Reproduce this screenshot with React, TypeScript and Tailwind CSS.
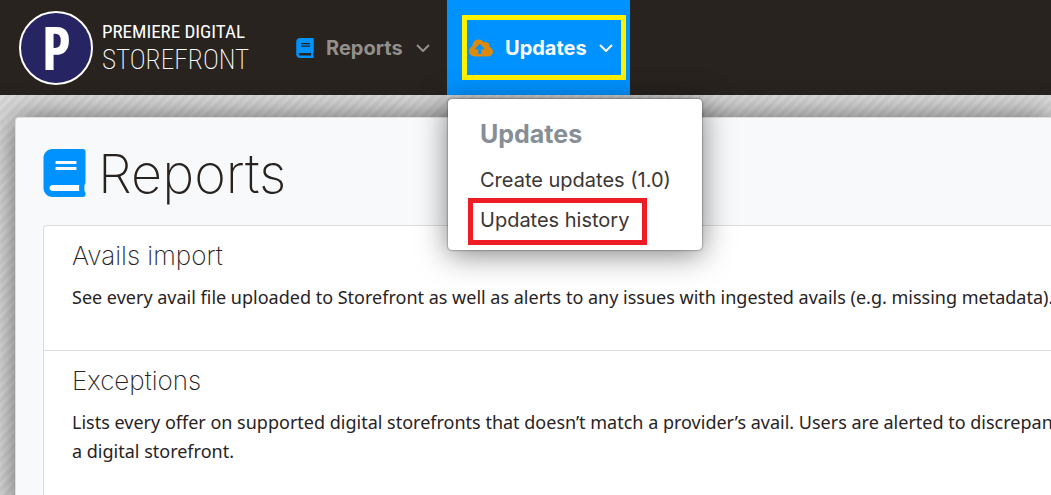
import React, { useState } from 'react';
import { FaBook, FaCloudUploadAlt } from 'react-icons/fa';

const reports = [
  {
    title: 'Avails import',
    lines: [
      'See every avail file uploaded to Storefront as well as alerts to any issues with ingested avails (e.g. missing metadata).'
    ]
  },
  {
    title: 'Exceptions',
    lines: [
      'Lists every offer on supported digital storefronts that doesn’t match a provider’s avail. Users are alerted to discrepan',
      'a digital storefront.'
    ]
  }
];

const Chevron: React.FC = () => (
  <svg viewBox="0 0 14 8" className="w-[14px] h-2" fill="none" stroke="currentColor" strokeWidth="2" aria-hidden="true">
    <path d="M1 1 L7 7 L13 1" />
  </svg>
);

const Logo: React.FC = () => (
  <a href="#" aria-label="Premiere Digital Storefront" className="flex items-center shrink-0 gap-2 text-white">
    <svg viewBox="0 0 76 76" className="w-[76px] h-[76px]" aria-hidden="true">
      <circle cx="38" cy="38" r="36" fill="#272463" stroke="#ffffff" strokeWidth="2" />
      <text x="38" y="60" textAnchor="middle" fill="#ffffff" fontSize="60" fontWeight="700" fontFamily="'Open Sans Condensed', 'Roboto Condensed', Roboto, sans-serif">
        P
      </text>
    </svg>
    <span className="flex flex-col w-[143px] font-['Roboto_Condensed','Open_Sans_Condensed','Roboto',sans-serif] whitespace-nowrap">
      <span className="text-[19px] leading-6 font-normal">PREMIERE DIGITAL</span>
      <span className="text-[27px] leading-8 font-extralight">STOREFRONT</span>
    </span>
  </a>
);

const UpdatesMenu: React.FC = () => (
  <div className="absolute left-px top-[99px] z-10 w-[254px] h-[151px] rounded bg-white px-8 pt-[19px] shadow-[0_4px_30px_rgba(0,0,0,0.5),0_0_2px_rgba(0,0,0,0.7)]">
    <h2 className="text-[25px] leading-8 font-bold text-[#868e96]">Updates</h2>
    <ul className="mt-[10px] text-[20px] leading-10 text-[#3a3633] whitespace-nowrap">
      <li>
        <a href="#create">Create updates (1.0)</a>
      </li>
      <li className="relative">
        <a href="#history">Updates history</a>
        <span className="absolute -left-3 -top-0.5 w-[179px] h-[47px] border-5 border-[#ee1c25] pointer-events-none" />
      </li>
    </ul>
  </div>
);

const App: React.FC = () => {
  const [open, setOpen] = useState(true);

  return (
    <div className="min-h-screen flex flex-col overflow-hidden bg-[#d8d8d8] bg-[repeating-linear-gradient(135deg,#dfdfdf_0px,#d3d3d3_3px,#d3d3d3_4px,#dfdfdf_7px)] font-['Inter',sans-serif] text-[#28231f]">
      <header className="flex h-[95px] bg-[#28231f] pl-[18px]">
        <Logo />
        <nav className="flex ml-[33px]">
          <button className="flex items-center w-[169px] pl-[18px] text-[20px] font-bold text-[#938f8c]">
            <FaBook className="w-[18px] h-5 text-[#0092ff]" />
            <span className="ml-3 w-[90px] text-left">Reports</span>
            <Chevron />
          </button>
          <div className="relative">
            <button
              onClick={() => setOpen(!open)}
              aria-expanded={open}
              className="flex items-center w-[183px] h-full pl-[22px] bg-[#0092ff] text-[20px] font-bold text-white"
            >
              <FaCloudUploadAlt className="w-6 h-5 text-[#dc8a0c]" />
              <span className="ml-3 w-[94px] text-left">Updates</span>
              <Chevron />
            </button>
            <span className="absolute left-[15px] top-[15px] w-[164px] h-[65px] border-5 border-[#fff200] pointer-events-none" />
            {open && <UpdatesMenu />}
          </div>
        </nav>
      </header>

      <main className="flex-1 mt-[22px] ml-[15px] pl-[27px] pt-[25px] rounded-tl border-t border-l border-[#dedede] bg-[#f8f9fb] shadow-[0_0_30px_rgba(0,0,0,0.55)]">
        <h1 className="flex items-center gap-3 h-[60px] text-[54px] font-extralight">
          <FaBook className="w-[43px] h-12 text-[#0092ff]" />
          Reports
        </h1>
        <div className="mt-[22px] rounded-tl border-t border-l border-[#dcdcdc] bg-white">
          {reports.map((report) => (
            <section key={report.title} className="h-[125px] pl-7 pt-4 border-b border-[#dcdcdc] last:h-[160px]">
              <h2 className="text-[26px] leading-7 font-extralight">{report.title}</h2>
              <p className="mt-[13px] font-['Noto_Sans',sans-serif] text-[18px] leading-[29px] whitespace-nowrap">
                {report.lines.map((line) => (
                  <span key={line} className="block">{line}</span>
                ))}
              </p>
            </section>
          ))}
        </div>
      </main>
    </div>
  );
};

export default App;
